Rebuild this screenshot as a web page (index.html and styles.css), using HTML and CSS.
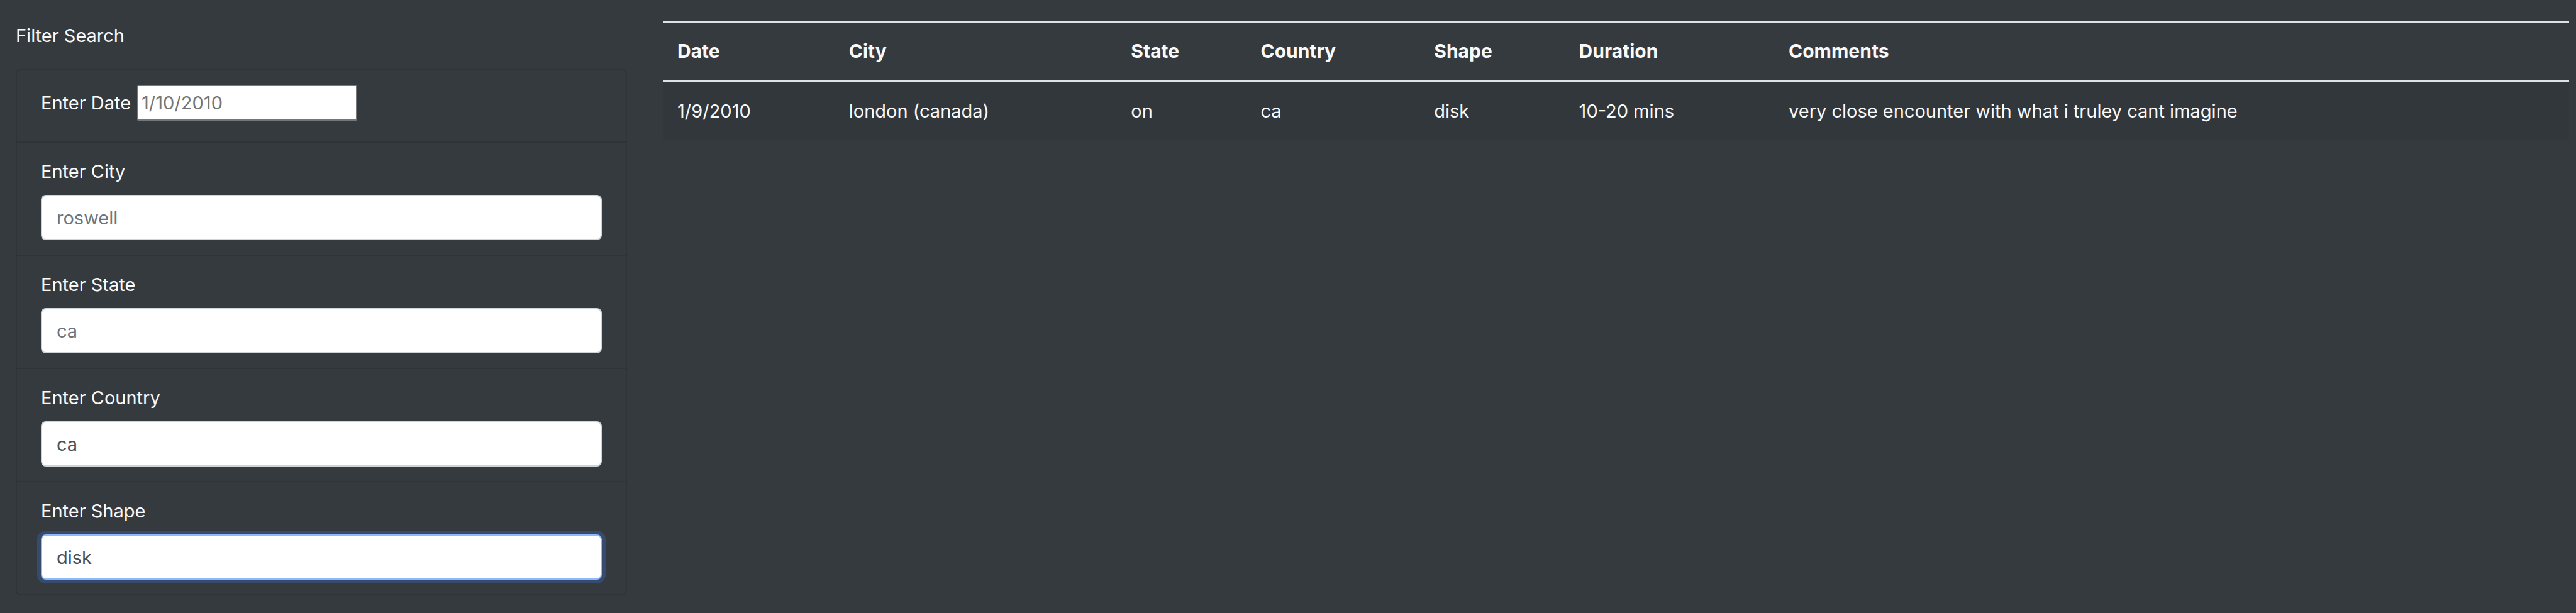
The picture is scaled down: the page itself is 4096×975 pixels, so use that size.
FILE: index.html
```html
<!DOCTYPE html>
<html lang="en">
<head>
<meta charset="utf-8">
<title>Sightings</title>
<link rel="stylesheet" href="styles.css">
</head>
<body>
<main class="page">
  <aside class="sidebar">
    <form>
      <p class="filter-title">Filter Search</p>
      <ul class="filters">
        <li class="filter filter-inline">
          <label for="date">Enter Date</label>
          <input class="plain-input" id="date" type="text" placeholder="1/10/2010">
        </li>
        <li class="filter">
          <label for="city">Enter City</label>
          <input class="control" id="city" type="text" placeholder="roswell">
        </li>
        <li class="filter">
          <label for="state">Enter State</label>
          <input class="control" id="state" type="text" placeholder="ca">
        </li>
        <li class="filter">
          <label for="country">Enter Country</label>
          <input class="control" id="country" type="text" value="ca">
        </li>
        <li class="filter">
          <label for="shape">Enter Shape</label>
          <input class="control control-active" id="shape" type="text" value="disk">
        </li>
      </ul>
    </form>
  </aside>
  <section class="results">
    <table class="sightings">
      <colgroup>
        <col class="col-date">
        <col class="col-city">
        <col class="col-state">
        <col class="col-country">
        <col class="col-shape">
        <col class="col-duration">
        <col>
      </colgroup>
      <thead>
        <tr>
          <th scope="col">Date</th>
          <th scope="col">City</th>
          <th scope="col">State</th>
          <th scope="col">Country</th>
          <th scope="col">Shape</th>
          <th scope="col">Duration</th>
          <th scope="col">Comments</th>
        </tr>
      </thead>
      <tbody>
        <tr>
          <td>1/9/2010</td>
          <td>london (canada)</td>
          <td>on</td>
          <td>ca</td>
          <td>disk</td>
          <td>10-20 mins</td>
          <td>very close encounter with what i truley cant imagine</td>
        </tr>
      </tbody>
    </table>
  </section>
</main>
</body>
</html>
```
FILE: styles.css
```css
*,
*::before,
*::after {
  box-sizing: border-box;
}

body {
  margin: 0;
  min-height: 100vh;
  background: #353a3e;
  color: #f8f9fa;
  font-family: Inter, "Liberation Sans", sans-serif;
  font-size: 29px;
  line-height: 45px;
}

.page {
  display: grid;
  grid-template-columns: calc(25% - 43px) minmax(0, 1fr);
  column-gap: 57px;
  align-items: start;
  padding: 34px 11px 0 25px;
}

.filter-title {
  margin: 0 0 31px;
}

.filters {
  margin: 0;
  padding: 0;
  list-style: none;
  border: 2px solid #2f3438;
  border-radius: 8px;
}

.filter {
  display: flex;
  flex-direction: column;
  gap: 15px;
  padding: 23px 38px;
}

.filter + .filter {
  border-top: 2px solid #2f3438;
}

.filter-inline {
  flex-direction: row;
  align-items: center;
  gap: 10px;
  padding-bottom: 33px;
}

.plain-input,
.control {
  margin: 0;
  background: #fff;
  font: inherit;
  outline: 0;
}

.plain-input {
  width: 350px;
  height: 57px;
  padding: 2px 5px;
  border: 2px solid #767676;
  border-radius: 2px;
  color: #000;
}

.plain-input::placeholder {
  color: #757575;
  opacity: 1;
}

.control {
  width: 100%;
  height: 72px;
  padding: 11px 23px;
  border: 2px solid #ced4da;
  border-radius: 8px;
  color: #495057;
}

.control::placeholder {
  color: #6c757d;
  opacity: 1;
}

.control:focus,
.control-active {
  border-color: #8bb9fa;
  box-shadow: 0 0 0 6px #364b6e;
}

.sightings {
  width: 100%;
  table-layout: fixed;
  border-spacing: 0;
}

.col-date { width: 9%; }
.col-city { width: 14.8%; }
.col-state { width: 6.8%; }
.col-country { width: 9.1%; }
.col-shape { width: 7.6%; }
.col-duration { width: 11%; }

.sightings th,
.sightings td {
  padding: 23px;
  text-align: left;
  vertical-align: top;
}

.sightings th {
  border-top: 2px solid #dee2e6;
  border-bottom: 4px solid #dee2e6;
  font-size: 30px;
  font-weight: 700;
}

.sightings tbody tr:nth-child(odd) {
  background: #32373b;
}
```
